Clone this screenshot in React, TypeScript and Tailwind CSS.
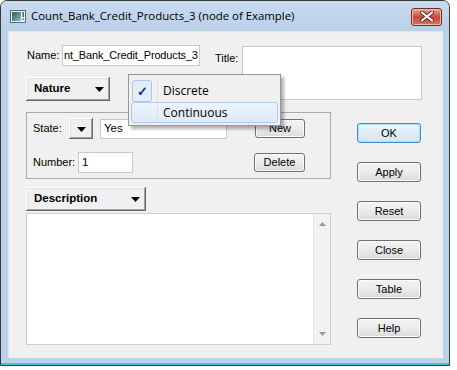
import React from 'react';

const dlgFont = { fontFamily: '"Liberation Sans", Arial, sans-serif' };
const uiFont = { fontFamily: '"Open Sans", "Noto Sans", sans-serif' };

const raised =
  'bg-[#f0f0f0] shadow-[inset_-1px_-1px_#696969,inset_1px_1px_#ffffff,inset_-2px_-2px_#a0a0a0,inset_2px_2px_#e3e3e3]';

const Arrow: React.FC = () => (
  <svg width="9" height="5" viewBox="0 0 9 5">
    <path d="M0 0H9L4.5 5Z" fill="#000" />
  </svg>
);

const PushButton: React.FC<{ label: string; primary?: boolean; size?: string; className?: string }> = ({
  label,
  primary,
  size = 'h-[20px] w-[64px]',
  className = '',
}) => (
  <div
    className={`flex items-center justify-center rounded-[3px] border text-[11px] text-black ${size} ${
      primary
        ? 'border-[#3c8fd0] bg-linear-to-b from-[#edf5fb] to-[#d3e5f2] shadow-[inset_0_0_0_1px_#a6e3fa]'
        : 'border-[#707070] bg-linear-to-b from-[#f3f3f3] via-[#ebebeb] to-[#dbdbdb] shadow-[inset_0_0_0_1px_#fbfbfb]'
    } ${className}`}
  >
    {label}
  </div>
);

const TitleIcon: React.FC = () => (
  <svg width="16" height="13" viewBox="0 0 16 13">
    <defs>
      <linearGradient id="scr" x1="0" y1="0" x2="1" y2="1">
        <stop offset="0" stopColor="#1f5e5a" />
        <stop offset="1" stopColor="#8cc6c0" />
      </linearGradient>
    </defs>
    <rect x="0.5" y="0.5" width="15" height="12" fill="#eef2f6" stroke="#56687c" />
    <rect x="2" y="2" width="9" height="9" fill="url(#scr)" />
    <rect x="12.5" y="2" width="1.5" height="5" fill="#3d6b8f" />
    <rect x="12.5" y="8.5" width="1.5" height="1.5" fill="#3d6b8f" />
  </svg>
);

const CloseBtn: React.FC = () => (
  <div className="flex h-[18px] w-[31px] items-center justify-center rounded-[3px] border border-[#6b2f2a] bg-linear-to-b from-[#e9a99b] via-[#c8463a] to-[#d8775f] shadow-[inset_0_0_0_1px_#f0b8ac]">
    <svg width="14" height="11" viewBox="0 0 14 11">
      <path d="M2 1.5L12 9.5M12 1.5L2 9.5" stroke="#5a2a26" strokeWidth="4" strokeLinecap="round" />
      <path d="M2 1.5L12 9.5M12 1.5L2 9.5" stroke="#ffffff" strokeWidth="2.2" strokeLinecap="round" />
    </svg>
  </div>
);

const Field: React.FC<{ className?: string; children?: React.ReactNode }> = ({ className = '', children }) => (
  <div className={`overflow-hidden whitespace-nowrap border border-[#c9c9c9] bg-white text-[11.5px] text-black ${className}`}>
    {children}
  </div>
);

const App: React.FC = () => {
  return (
    <div className="h-[370px] w-[457px] overflow-hidden bg-white" style={dlgFont}>
      <div className="flex h-[366px] w-[450px] flex-col rounded-t-[7px] border border-[#3a3a3a] bg-[#bcd3ea] shadow-[inset_0_-2px_0_#3fc3e0]">
        {/* title bar */}
        <div className="flex h-[30px] items-center rounded-t-[6px] bg-linear-to-b from-[#c9dbef] to-[#b9d0e8] pl-[9px] pr-[7px]">
          <TitleIcon />
          <span className="ml-[5px] text-[11.4px] text-black" style={uiFont}>
            Count_Bank_Credit_Products_3 (node of Example)
          </span>
          <div className="ml-auto mt-[1px]">
            <CloseBtn />
          </div>
        </div>

        {/* client area */}
        <div className="relative ml-[7px] h-[327px] w-[435px] bg-[#f0f0f0] pl-[18px] pt-[14px] shadow-[inset_1px_1px_0_#e2e2e2]">
          <div className="flex">
            <div className="w-[189px]">
              <div className="flex h-[21px] items-center">
                <span className="w-[36px] pl-[1px] text-[11px]">Name:</span>
                <Field className="flex h-[21px] w-[138px] items-center pl-[1px] text-[11px] tracking-[-0.15px]">
                  nt_Bank_Credit_Products_3
                </Field>
              </div>
              <div className={`mt-[11px] flex h-[24px] w-[84px] items-center justify-between pl-[8px] pr-[6px] ${raised}`}>
                <span className="text-[11.5px] font-bold">Nature</span>
                <Arrow />
              </div>
            </div>
            <span className="mt-[5px] w-[27px] text-[11px]">Title:</span>
            <Field className="mt-[1px] h-[54px] w-[180px]" />
          </div>

          <div className="mt-[11px] flex">
            <div className="w-[305px]">
              {/* state group */}
              <div className="h-[67px] border border-[#a9a9a9] pl-[6px] pt-[5px] pr-[25px]">
                <div className="flex items-center">
                  <span className="w-[36px] text-[11px]">State:</span>
                  <div className={`flex h-[21px] w-[24px] items-center justify-center pt-[1px] ${raised}`}>
                    <Arrow />
                  </div>
                  <Field className="ml-[7px] h-[20px] w-[127px] pl-[3px]">Yes</Field>
                  <PushButton label="New" size="h-[19px] w-[50px]" className="ml-auto" />
                </div>
                <div className="mt-[13px] flex items-center">
                  <span className="w-[45px] text-[11px]">Number:</span>
                  <Field className="flex h-[21px] w-[55px] items-center pl-[3px]">1</Field>
                  <PushButton label="Delete" size="h-[19px] w-[51px]" className="ml-auto" />
                </div>
              </div>

              <div className={`mt-[8px] flex h-[24px] w-[120px] items-center justify-between pl-[8px] pr-[6px] ${raised}`}>
                <span className="text-[11.5px] font-bold">Description</span>
                <Arrow />
              </div>

              <div className="mt-[2px] flex h-[132px] border border-[#cfcfcf] bg-white">
                <div className="flex-1" />
                <div className="flex w-[17px] flex-col items-center justify-between border-l border-[#e6e6e6] bg-[#f2f2f2] py-[8px]">
                  <svg width="7" height="4" viewBox="0 0 7 4">
                    <path d="M0 4H7L3.5 0Z" fill="#9a9a9a" />
                  </svg>
                  <svg width="7" height="4" viewBox="0 0 7 4">
                    <path d="M0 0H7L3.5 4Z" fill="#9a9a9a" />
                  </svg>
                </div>
              </div>
            </div>

            <div className="ml-[26px] flex flex-col gap-[19px] pt-[11px]">
              <PushButton label="OK" primary />
              <PushButton label="Apply" />
              <PushButton label="Reset" />
              <PushButton label="Close" />
              <PushButton label="Table" />
              <PushButton label="Help" />
            </div>
          </div>

          {/* popup menu */}
          <div
            className="absolute left-[120px] top-[43px] w-[153px] border border-[#979797] bg-[#f0f0f0] px-[2px] pb-[2px] pt-[5px] shadow-[3px_3px_3px_rgba(0,0,0,0.3)]"
            style={uiFont}
          >
            <div className="relative flex h-[22px] items-center">
              <div className="ml-[1px] flex h-[22px] w-[20px] items-center justify-center rounded-[3px] border border-[#a7c6ea] bg-[#e4eefa]">
                <span className="text-[13px] font-bold leading-none text-[#1b2f95]">✓</span>
              </div>
              <span className="ml-[11px] text-[12px] text-black">Discrete</span>
            </div>
            <div className="flex h-[21px] items-center rounded-[3px] border border-[#abcdf4] bg-linear-to-b from-[#eef4fc] to-[#dfe9f8]">
              <span className="ml-[31px] text-[12px] text-black">Continuous</span>
            </div>
            <div className="absolute bottom-[2px] left-[28px] top-[2px] w-[2px] border-l border-[#e0e0e0] border-r-white" />
          </div>
        </div>
      </div>
    </div>
  );
};

export default App;
